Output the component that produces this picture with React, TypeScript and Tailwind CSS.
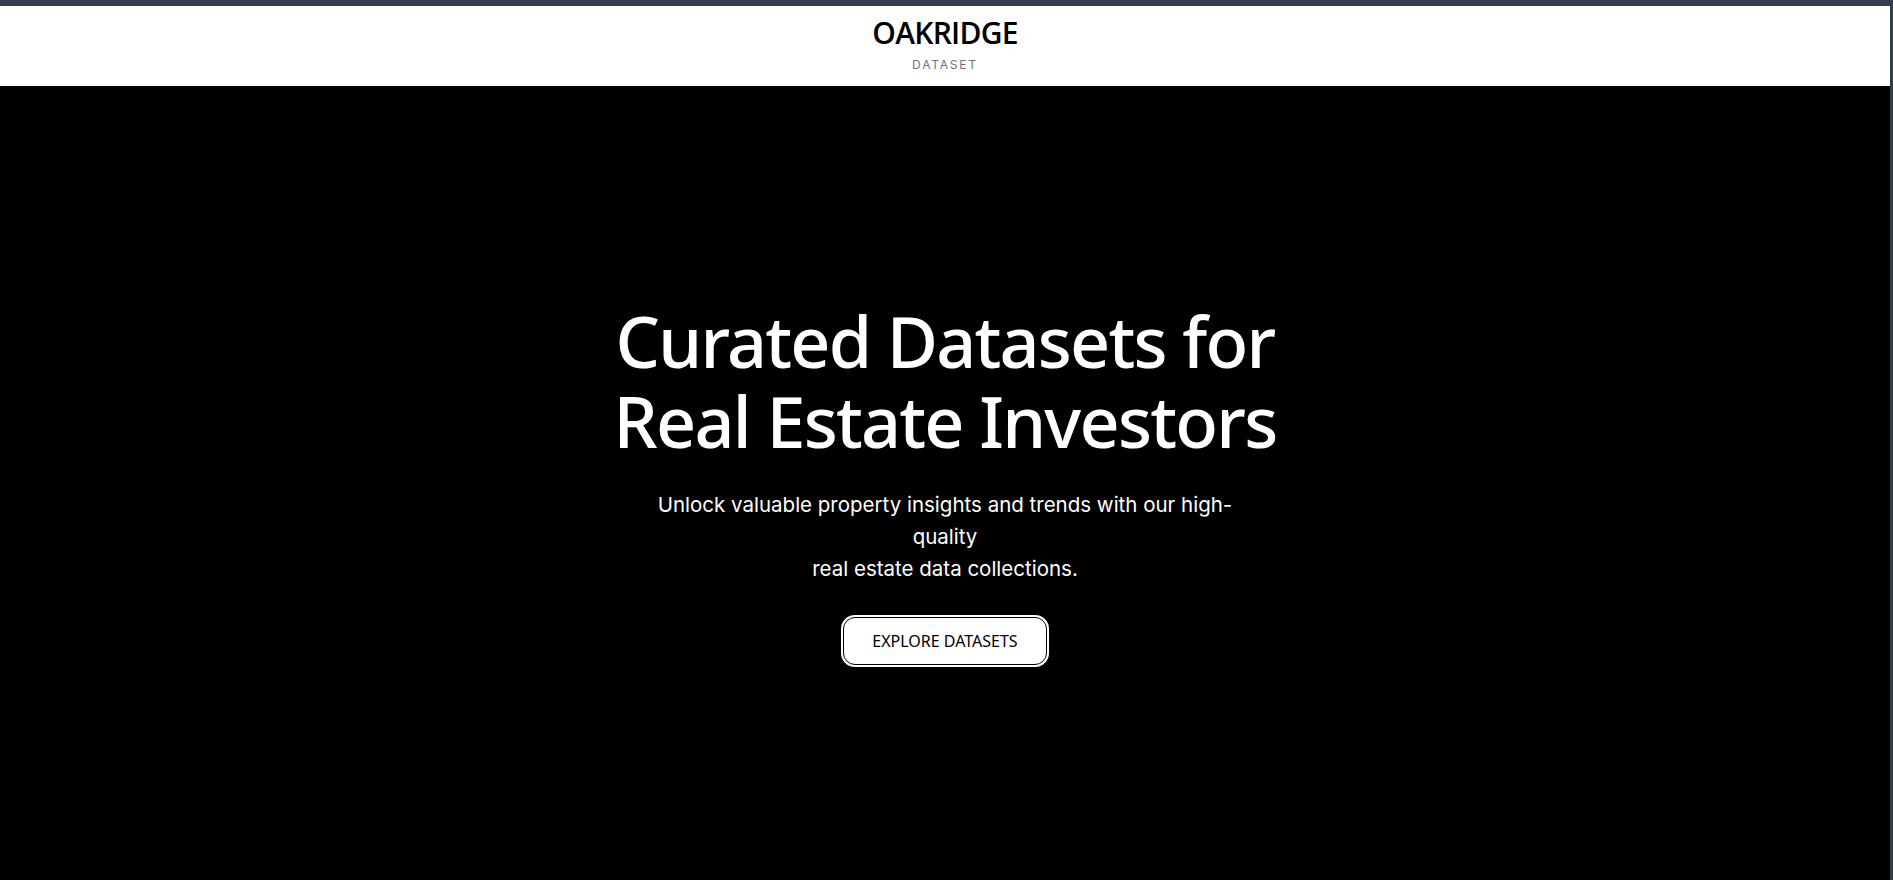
import React from "react";

const Header = () => {
	return (
		<header className="flex h-20 flex-col items-center justify-center bg-white">
			<h1 className="text-[30px] font-semibold leading-none tracking-tight text-black [font-family:'Open_Sans',sans-serif]">
				OAKRIDGE
			</h1>
			<span className="mt-2 text-[12px] tracking-[0.15em] text-gray-500 [font-family:Inter,sans-serif]">
				DATASET
			</span>
		</header>
	);
};

const Hero = () => {
	return (
		<section className="flex flex-1 flex-col items-center justify-center bg-black text-center">
			<h2 className="text-[70px] font-medium leading-[80px] tracking-tight text-white [font-family:'Noto_Sans',sans-serif]">
				Curated Datasets for
				<br />
				Real Estate Investors
			</h2>
			<p className="mt-7 max-w-[600px] text-[20.5px] leading-8 text-white [font-family:Inter,sans-serif]">
				Unlock valuable property insights and trends with our high-quality
				<br />
				real estate data collections.
			</p>
			<button className="mt-8 h-12 rounded-xl border border-black bg-white px-7 text-base text-black ring-2 ring-white [font-family:'Noto_Sans',sans-serif]">
				EXPLORE DATASETS
			</button>
		</section>
	);
};

export default function App() {
	return (
		<div className="flex h-[880px] flex-col border-t-[6px] border-r-[3px] border-[#343d4d]">
			<Header />
			<Hero />
		</div>
	);
}
